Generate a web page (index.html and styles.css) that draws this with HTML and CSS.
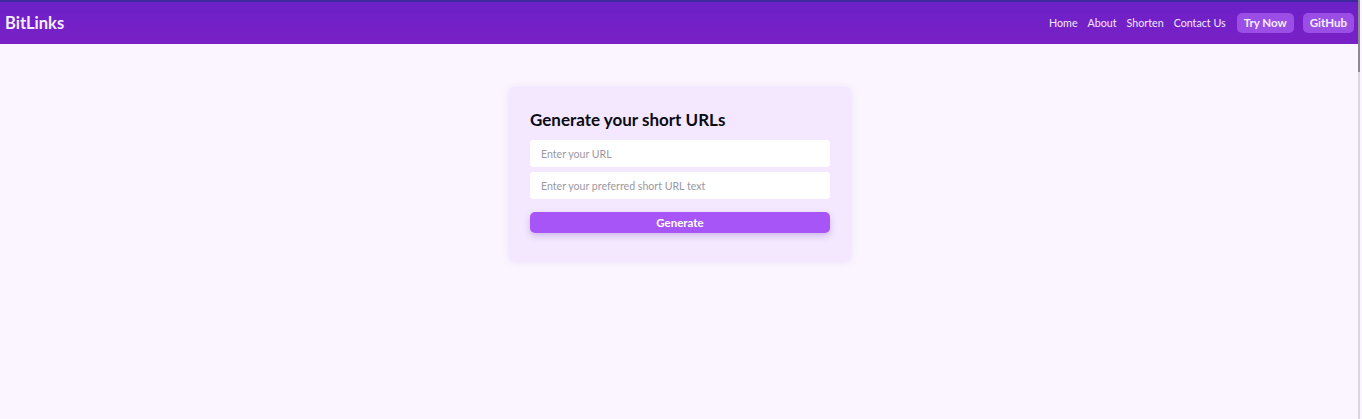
FILE: index.html
```html
<!DOCTYPE html>
<html lang="en">
<head>
<meta charset="utf-8">
<title>BitLinks</title>
<link rel="stylesheet" href="styles.css">
</head>
<body>
<nav class="navbar">
  <div class="logo">BitLinks</div>
  <ul class="nav-links">
    <li><a href="#">Home</a></li>
    <li><a href="#">About</a></li>
    <li><a href="#">Shorten</a></li>
    <li><a href="#">Contact Us</a></li>
    <li class="nav-buttons">
      <a class="nav-btn" href="#">Try Now</a>
      <a class="nav-btn" href="#">GitHub</a>
    </li>
  </ul>
</nav>
<main class="main">
  <section class="card">
    <h1 class="card-title">Generate your short URLs</h1>
    <div class="form">
      <input class="field" type="text" placeholder="Enter your URL">
      <input class="field" type="text" placeholder="Enter your preferred short URL text">
      <button class="generate" type="button">Generate</button>
    </div>
  </section>
</main>
<div class="scrollbar"><div class="thumb"></div></div>
</body>
</html>
```
FILE: styles.css
```css
* { box-sizing: border-box; }
html, body { height: 100%; }
body {
  margin: 0;
  background: #faf5ff;
  font-family: Lato, "Noto Sans", sans-serif;
  color: #111;
  overflow: hidden;
}
.navbar {
  height: 44px;
  display: flex;
  align-items: center;
  justify-content: space-between;
  padding: 0 4px 0 5px;
  margin-right: 4px;
  background: linear-gradient(180deg, #6b21c8 0%, #7a20c6 100%);
  border-top: 2px solid #3c2a9e;
  color: #fff;
}
.logo {
  font-weight: 700;
  font-size: 16.5px;
  color: #f5edff;
  margin-bottom: 1px;
}
.nav-links {
  list-style: none;
  margin: 0;
  padding: 0;
  display: flex;
  align-items: center;
  gap: 10px;
}
.nav-links a {
  color: #f3e8ff;
  text-decoration: none;
  font-size: 10.7px;
  line-height: 14px;
  display: block;
}
.nav-buttons {
  display: flex;
  gap: 9px;
  margin-left: 1px;
}
.nav-links .nav-btn {
  display: block;
  height: 20px;
  line-height: 20px;
  padding: 0 7px;
  border-radius: 5px;
  background: #9a4ee6;
  color: #f7efff;
  font-weight: 700;
  font-size: 11.5px;
}
.main {
  display: flex;
  justify-content: center;
  padding-top: 43px;
  margin-right: 2px;
}
.card {
  width: 342px;
  background: #f3e8ff;
  border-radius: 6px;
  padding: 22px 21px 29px;
  box-shadow: 0 0 6px rgba(200, 170, 240, 0.25);
}
.card-title {
  margin: 0 0 10px;
  font-size: 17px;
  font-weight: 700;
  line-height: 21px;
  color: #0b0b14;
}
.form {
  display: flex;
  flex-direction: column;
  gap: 5px;
}
.field {
  height: 27px;
  border: none;
  border-radius: 4px;
  background: #fff;
  padding: 0 11px;
  font-family: inherit;
  font-size: 10.6px;
  outline: none;
}
.field::placeholder { color: #9a98a3; }
.generate {
  margin-top: 8px;
  height: 21px;
  border: none;
  border-radius: 5px;
  background: #a855f7;
  color: #fff;
  font-family: inherit;
  font-weight: 700;
  font-size: 11.5px;
  box-shadow: 0 3px 6px rgba(130, 80, 190, 0.3);
}
.scrollbar {
  position: fixed;
  top: 0;
  right: 2px;
  width: 2px;
  height: 100%;
  background: #d9d6dc;
}
.thumb {
  height: 72px;
  background: #8d8a90;
}
```
